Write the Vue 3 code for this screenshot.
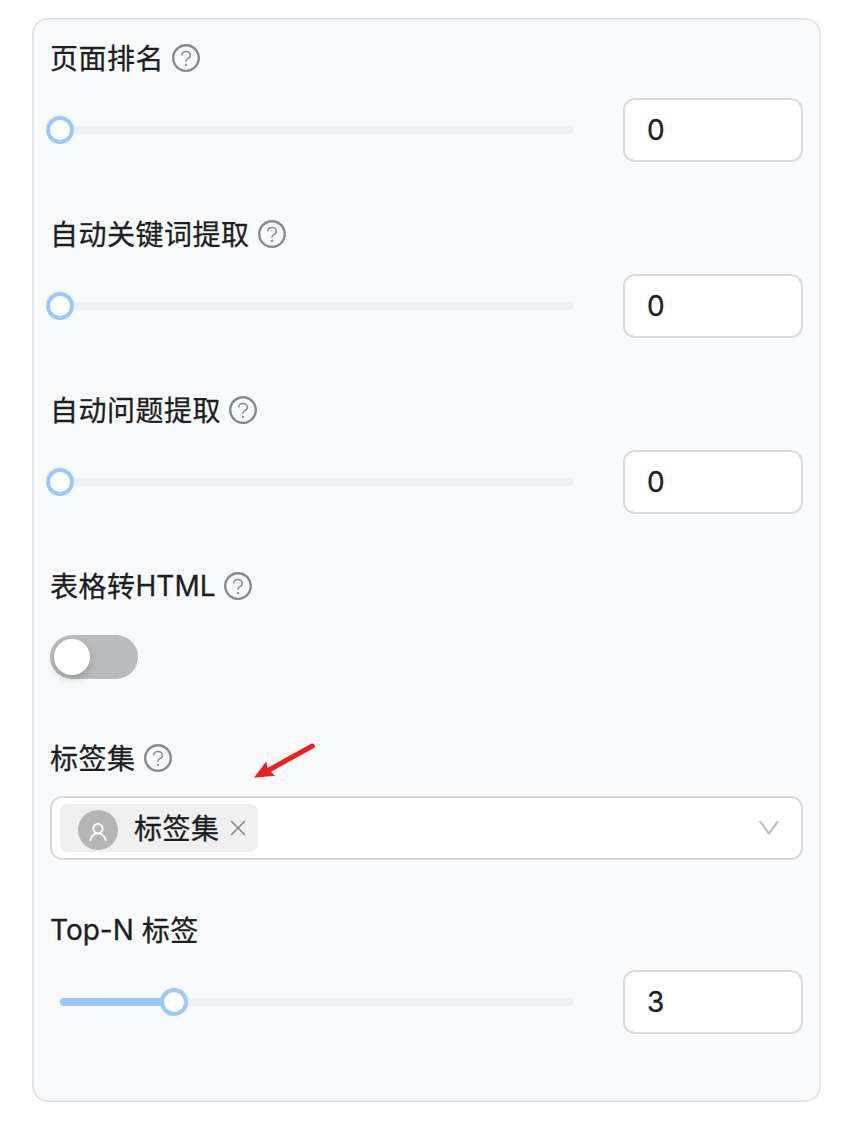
<script setup>
const icons = {
  ring: 'M512 64C264.6 64 64 264.6 64 512s200.6 448 448 448 448-200.6 448-448S759.4 64 512 64zm0 820c-205.4 0-372-166.6-372-372s166.6-372 372-372 372 166.6 372 372-166.6 372-372 372z',
  mark: 'M374 434v-14C374 354 434 300 512 300s138 54 138 120c0 52-32 92-82 112-34 14-56 46-56 82v16',
  down: 'M884 256h-75c-5.1 0-9.9 2.5-12.9 6.6L512 654.2 227.9 262.6c-3-4.1-7.8-6.6-12.9-6.6h-75c-6.5 0-10.3 7.4-6.5 12.7l352.6 486.1c12.8 17.6 39 17.6 51.7 0l352.6-486.1c3.9-5.3.1-12.7-6.4-12.7z',
  user: 'M858.5 763.6a374 374 0 00-80.6-119.5 375.63 375.63 0 00-119.5-80.6c-.4-.2-.8-.3-1.2-.5C719.5 518 760 444.7 760 362c0-137-111-248-248-248S264 225 264 362c0 82.7 40.5 156 102.8 201.1-.4.2-.8.3-1.2.5-44.8 18.9-85 46-119.5 80.6a375.63 375.63 0 00-80.6 119.5A371.7 371.7 0 00136 901.8a8 8 0 008 8.2h60c4.4 0 7.9-3.5 8-7.8 2-77.2 33-149.5 87.8-204.3 56.7-56.7 132-87.9 212.2-87.9s155.5 31.2 212.2 87.9C779 752.7 810 825 812 902.2c.1 4.4 3.6 7.8 8 7.8h60a8 8 0 008-8.2c-1-47.8-10.9-94.3-29.5-138.2zM512 534c-45.9 0-89.1-17.9-121.6-50.4S340 407.9 340 362c0-45.9 17.9-89.1 50.4-121.6S466.1 190 512 190s89.1 17.9 121.6 50.4S684 316.1 684 362c0 45.9-17.9 89.1-50.4 121.6S557.9 534 512 534z',
}

const items = [
  { kind: 'slider', cjk: '页面排名', help: true, value: 0, percent: 0 },
  { kind: 'slider', cjk: '自动关键词提取', help: true, value: 0, percent: 0 },
  { kind: 'slider', cjk: '自动问题提取', help: true, value: 0, percent: 0 },
  { kind: 'switch', cjk: '表格转', after: 'HTML', help: true },
  { kind: 'select', cjk: '标签集', help: true, tag: '标签集' },
  { kind: 'slider', before: 'Top-N ', cjk: '标签', value: 3, percent: 22.22 },
]
</script>

<template>
  <main class="card">
    <section v-for="(item, i) in items" :key="i" :class="['item', item.kind]">
      <div class="label">
        <span class="text"><span v-if="item.before">{{ item.before }}</span><span class="cjk">{{ item.cjk }}</span><span v-if="item.after">{{ item.after }}</span></span>
        <svg v-if="item.help" class="help" viewBox="64 64 896 896">
          <path :d="icons.ring" />
          <path class="mark" :d="icons.mark" />
          <circle cx="512" cy="734" r="36" />
        </svg>
        <svg v-if="item.kind === 'select'" class="arrow" viewBox="0 0 64 40">
          <path d="M59.300 6 15 30.500" stroke="#f01d22" stroke-width="5" stroke-linecap="round" />
          <path d="M1 37.700 13.300 21.300 14.500 28.500 22 35.700Z" fill="#f01d22" />
        </svg>
      </div>

      <div v-if="item.kind === 'slider'" class="control">
        <div class="rail">
          <div class="fill" :style="{ width: item.percent + '%' }"></div>
          <div class="handle" :style="{ left: item.percent + '%' }"></div>
        </div>
        <div class="number">{{ item.value }}</div>
      </div>

      <div v-else-if="item.kind === 'switch'" class="toggle"><div class="knob"></div></div>

      <div v-else class="picker">
        <div class="tag">
          <span class="avatar"><svg viewBox="64 64 896 896"><path :d="icons.user" /></svg></span>
          <span class="tag-text cjk">{{ item.tag }}</span>
          <svg class="close" viewBox="0 0 16 16"><path d="M1 1 15 15M15 1 1 15" /></svg>
        </div>
        <svg class="down" viewBox="64 64 896 896"><path :d="icons.down" /></svg>
      </div>
    </section>
  </main>
</template>

<style>
body {
  background: #fff;
}
</style>

<style scoped>
.card {
  box-sizing: border-box;
  width: 789px;
  height: 1084px;
  margin: 18px 0 0 32px;
  padding: 16px;
  border: 2px solid #e3e4e6;
  border-radius: 16px;
  background: #f9fafc;
  color: #1d1e1f;
  font: 28px/44px Inter, "Noto Sans CJK SC", sans-serif;
  -webkit-text-stroke: 0.3px #1d1e1f;
}
.item {
  margin-bottom: 50px;
}
.item.switch {
  margin-bottom: 57px;
}
.item.select {
  margin-bottom: 48px;
}
.label {
  display: flex;
  align-items: center;
  height: 44px;
  margin-bottom: 18px;
}
.switch .label {
  margin-bottom: 27px;
}
.select .label {
  margin-bottom: 16px;
}
.text {
  white-space: pre;
}
.cjk {
  display: inline-block;
  letter-spacing: 0.5px;
  transform: translateY(1px);
}
.help {
  width: 28px;
  height: 28px;
  margin-left: 8px;
  fill: #88898b;
}
.help .mark {
  fill: none;
  stroke: #88898b;
  stroke-width: 48;
}
.arrow {
  width: 64px;
  height: 40px;
  margin: 4px 0 0 81px;
  fill: none;
}
.control {
  display: flex;
  align-items: center;
  justify-content: space-between;
  height: 64px;
}
.rail {
  position: relative;
  width: 513px;
  height: 8px;
  margin-left: 10px;
  border-radius: 4px;
  background: #eeeff1;
}
.fill {
  height: 8px;
  border-radius: 4px;
  background: #9cc9fb;
}
.handle {
  position: absolute;
  top: -10px;
  box-sizing: border-box;
  width: 28px;
  height: 28px;
  margin-left: -14px;
  border: 4px solid #9cc9fb;
  border-radius: 50%;
  background: #fff;
}
.number {
  box-sizing: border-box;
  width: 180px;
  height: 64px;
  padding: 8px 22px;
  border: 2px solid #d9d9d9;
  border-radius: 12px;
  background: #fff;
}
.toggle {
  box-sizing: border-box;
  width: 88px;
  height: 44px;
  padding: 4px;
  border-radius: 22px;
  background: #babbbd;
}
.knob {
  width: 36px;
  height: 36px;
  border-radius: 50%;
  background: #fff;
  box-shadow: 0 4px 8px rgba(0, 35, 11, 0.2);
}
.picker {
  display: flex;
  align-items: center;
  justify-content: space-between;
  box-sizing: border-box;
  height: 64px;
  padding: 0 20px 0 8px;
  border: 2px solid #d9d9d9;
  border-radius: 12px;
  background: #fff;
}
.tag {
  display: flex;
  align-items: center;
  box-sizing: border-box;
  width: 198px;
  height: 48px;
  padding-left: 18px;
  border-radius: 8px;
  background: #f0f0f0;
}
.avatar {
  display: flex;
  align-items: center;
  justify-content: center;
  box-sizing: border-box;
  width: 40px;
  height: 40px;
  margin-top: 4px;
  padding-top: 4px;
  border-radius: 50%;
  background: #b5b5b5;
}
.avatar svg {
  width: 20px;
  height: 20px;
  fill: #fff;
}
.tag-text {
  margin-left: 16px;
}
.close {
  width: 16px;
  height: 16px;
  margin-left: 10px;
  fill: none;
  stroke: #888;
  stroke-width: 1.7;
}
.down {
  width: 24px;
  height: 24px;
  fill: #bfbfbf;
}
</style>
